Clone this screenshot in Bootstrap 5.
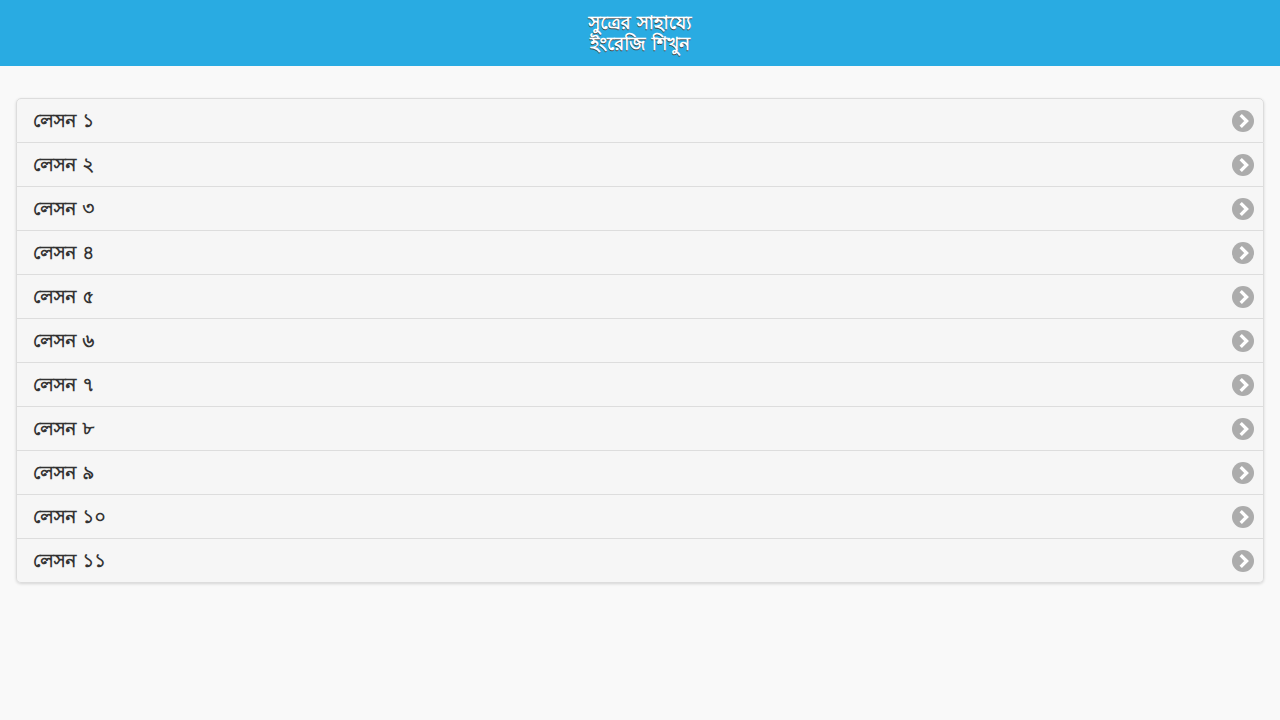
<!DOCTYPE html>
<html lang="bn">
<head>
<meta charset="utf-8">
<meta name="viewport" content="width=device-width, initial-scale=1">
<title>সুত্রের সাহায্যে ইংরেজি শিখুন</title>
<link href="https://cdn.jsdelivr.net/npm/bootstrap@5.3.0/dist/css/bootstrap.min.css" rel="stylesheet">
<style>
body { background: #f9f9f9; color: #333; font-family: "DejaVu Sans", "Lohit Bengali", sans-serif; }
.app-header { background: #29abe2; color: #fff; text-shadow: 0 1px 0 #444; padding: 12px 0; }
.app-header h1 { font-size: 18px; line-height: 21px; }
.lessons { margin: 32px 16px; border-radius: 5px; box-shadow: 0 1px 3px rgba(0,0,0,.15); }
.lessons .list-group-item { background: #f6f6f6; border-color: #ddd; color: #333; padding: 11px 9px 10px 16px; font-size: 18px; line-height: 22px; text-shadow: 0 1px 0 #f3f3f3; }
.lessons .list-group-item:hover { background: #ededed; }
</style>
</head>
<body>
<header class="app-header text-center"><h1 class="m-0 fw-bold">সুত্রের সাহায্যে<br>ইংরেজি শিখুন</h1></header>
<svg class="d-none" aria-hidden="true">
  <symbol id="arrow" viewBox="0 0 22 22"><circle cx="11" cy="11" r="11" fill="#acacac"/><path d="M8.7 5.1 14.6 11l-5.9 5.9" fill="none" stroke="#fff" stroke-width="3.3"/></symbol>
</svg>
<main>
<div class="list-group lessons">
<a href="#" class="list-group-item list-group-item-action fw-bold d-flex justify-content-between align-items-center"><span>লেসন ১</span><svg width="22" height="22" aria-hidden="true"><use href="#arrow"/></svg></a>
<a href="#" class="list-group-item list-group-item-action fw-bold d-flex justify-content-between align-items-center"><span>লেসন ২</span><svg width="22" height="22" aria-hidden="true"><use href="#arrow"/></svg></a>
<a href="#" class="list-group-item list-group-item-action fw-bold d-flex justify-content-between align-items-center"><span>লেসন ৩</span><svg width="22" height="22" aria-hidden="true"><use href="#arrow"/></svg></a>
<a href="#" class="list-group-item list-group-item-action fw-bold d-flex justify-content-between align-items-center"><span>লেসন ৪</span><svg width="22" height="22" aria-hidden="true"><use href="#arrow"/></svg></a>
<a href="#" class="list-group-item list-group-item-action fw-bold d-flex justify-content-between align-items-center"><span>লেসন ৫</span><svg width="22" height="22" aria-hidden="true"><use href="#arrow"/></svg></a>
<a href="#" class="list-group-item list-group-item-action fw-bold d-flex justify-content-between align-items-center"><span>লেসন ৬</span><svg width="22" height="22" aria-hidden="true"><use href="#arrow"/></svg></a>
<a href="#" class="list-group-item list-group-item-action fw-bold d-flex justify-content-between align-items-center"><span>লেসন ৭</span><svg width="22" height="22" aria-hidden="true"><use href="#arrow"/></svg></a>
<a href="#" class="list-group-item list-group-item-action fw-bold d-flex justify-content-between align-items-center"><span>লেসন ৮</span><svg width="22" height="22" aria-hidden="true"><use href="#arrow"/></svg></a>
<a href="#" class="list-group-item list-group-item-action fw-bold d-flex justify-content-between align-items-center"><span>লেসন ৯</span><svg width="22" height="22" aria-hidden="true"><use href="#arrow"/></svg></a>
<a href="#" class="list-group-item list-group-item-action fw-bold d-flex justify-content-between align-items-center"><span>লেসন ১০</span><svg width="22" height="22" aria-hidden="true"><use href="#arrow"/></svg></a>
<a href="#" class="list-group-item list-group-item-action fw-bold d-flex justify-content-between align-items-center"><span>লেসন ১১</span><svg width="22" height="22" aria-hidden="true"><use href="#arrow"/></svg></a>
</div>
</main>
<script src="https://cdn.jsdelivr.net/npm/bootstrap@5.3.0/dist/js/bootstrap.bundle.min.js"></script>
</body>
</html>
